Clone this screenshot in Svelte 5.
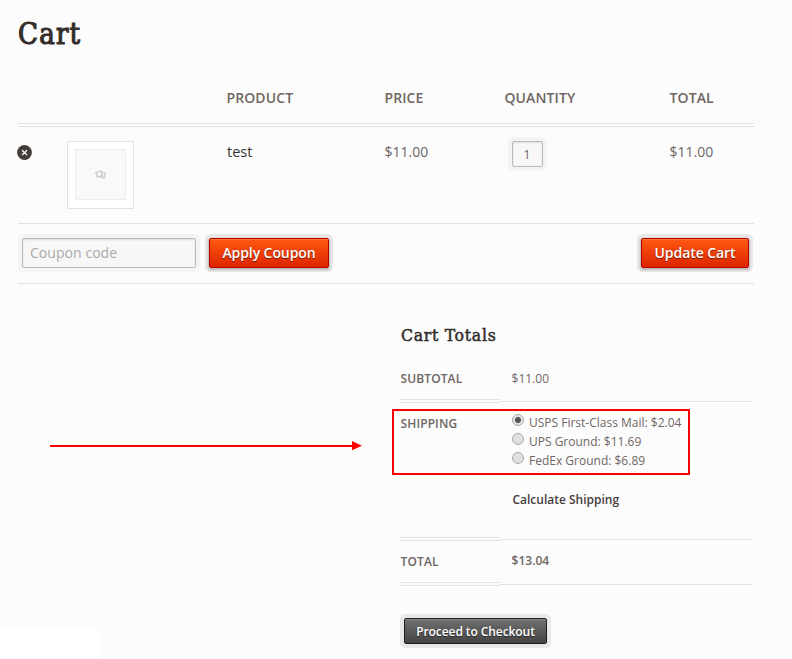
<script>
  let coupon = $state('');
  let selected = $state(0);
  const rates = ['USPS First-Class Mail: $2.04', 'UPS Ground: $11.69', 'FedEx Ground: $6.89'];
</script>

<main>
  <h1>Cart</h1>

  <div class="row head">
    <span class="product">PRODUCT</span>
    <span class="price">PRICE</span>
    <span class="qty">QUANTITY</span>
    <span>TOTAL</span>
  </div>

  <div class="row item">
    <button class="remove" aria-label="Remove">
      <svg width="15" height="15" viewBox="0 0 15 15">
        <circle cx="7.5" cy="7.5" r="7.4" fill="#463c39" />
        <path d="M5 5.2 10 10M10 5.2 5 10" stroke="#fff" stroke-width="1.2" />
      </svg>
    </button>
    <div class="thumb">
      <svg width="51" height="51" viewBox="0 0 51 51">
        <rect x=".5" y=".5" width="50" height="50" fill="#f9f9f9" stroke="#ebebeb" />
        <path d="M1 1 50 50M50 1 1 50" stroke="#f5f5f5" />
        <rect x="17" y="18" width="17" height="15" fill="#f9f9f9" />
        <g fill="none" stroke="#cbcbcb" stroke-width="1.4" stroke-linejoin="round">
          <path d="M20.8 23.6 26.2 22 27.4 26.6 22.5 28Z" />
          <path d="M26.2 23.1 30.4 24.4 29.2 28.8 24.7 27.6" />
        </g>
      </svg>
    </div>
    <span class="name">test</span>
    <span class="price">$11.00</span>
    <span class="qty"><input class="count" value="1" /></span>
    <span>$11.00</span>
  </div>

  <div class="row actions">
    <input class="coupon" placeholder="Coupon code" bind:value={coupon} />
    <button class="btn apply">Apply Coupon</button>
    <button class="btn update">Update Cart</button>
  </div>

  <section>
    <h2>Cart Totals</h2>
    <div class="line subtotal">
      <div class="label">SUBTOTAL</div>
      <div class="value">$11.00</div>
    </div>
    <div class="line shipping">
      <div class="label">SHIPPING</div>
      <div class="value">
        {#each rates as rate, i}
          <label><input type="radio" name="rate" value={i} bind:group={selected} /><span>{rate}</span></label>
        {/each}
        <div class="calc">Calculate Shipping</div>
      </div>
    </div>
    <div class="line total">
      <div class="label">TOTAL</div>
      <div class="value">$13.04</div>
    </div>
    <button class="btn checkout">Proceed to Checkout</button>
  </section>

  <div class="callout"></div>
  <svg class="arrow" width="312" height="10" viewBox="0 0 312 10">
    <path d="M0 4H302V0L312 4.7 302 9.3V6H0Z" fill="#f00" />
  </svg>
  <div class="patch"></div>
</main>

<style>
  :global(body) { background: #fcfcfc; overflow: hidden; }
  * { box-sizing: border-box; }
  main {
    position: relative;
    width: 792px;
    height: 659px;
    padding: 0 38px 0 18px;
    background: #fcfcfc;
    color: #6f6562;
    font: 14px/20px "Open Sans", "Noto Sans", sans-serif;
  }
  h1, h2 {
    margin: 0;
    color: #332e2b;
    font-family: "DejaVu Serif Condensed", "DejaVu Serif", serif;
    font-stretch: condensed;
    font-weight: 400;
    white-space: nowrap;
    -webkit-text-stroke: 1.1px #332e2b;
  }
  h1 { height: 73px; padding-top: 14px; font-size: 29px; line-height: 40px; letter-spacing: 1.2px; }
  h2 { height: 68px; font-size: 17.5px; line-height: 24px; padding: 39px 0 0 1px; letter-spacing: .7px; -webkit-text-stroke-width: .5px; }
  .row { display: flex; align-items: flex-start; border-bottom: 1px solid #e3e1e1; }
  .head { height: 54px; padding-top: 15px; border-bottom: 4px double #e3e1e1; font-weight: 550; letter-spacing: .1px; }
  .head .product { width: 158px; margin-left: 208.5px; }
  .price { width: 120px; }
  .qty { width: 165px; }
  .item { height: 97px; padding-top: 15px; }
  .remove { display: flex; width: 15px; height: 15px; margin: 3px 0 0 -1px; padding: 0; border: 0; background: none; }
  .thumb { display: flex; width: 67px; height: 68px; margin: -1px 93px 0 35px; padding: 7px; border: 1px solid #e3e1e1; background: #fff; }
  .name { width: 157.5px; color: #3b3431; font-weight: 500; font-size: 14.5px; }
  input { font-family: inherit; }
  .count, .coupon {
    display: block;
    border: 1px solid #bdb9b9;
    border-radius: 2px;
    outline: 0;
    background: #f7f7f7;
    box-shadow: inset 0 1px 2px #ddd, 0 0 0 4px #f4f4f4;
    color: #6f6562;
  }
  .count { width: 31px; height: 26px; margin: -1px 0 0 7px; padding: 1px 0 0; font-size: 12px; text-align: center; }
  .actions { height: 60px; padding: 14px 5px 0 4px; }
  .coupon { width: 174px; height: 30px; padding: 0 7px 2px; font-size: 14px; letter-spacing: .05px; }
  .coupon::placeholder { color: #aaa; }
  .btn {
    padding: 0;
    border: 1px solid #b80000;
    border-radius: 2px;
    background: linear-gradient(#ff5812, #dd2500);
    box-shadow: inset 0 1px 0 #ff762f, 0 1px 2px 1px #bbb, 0 0 0 4px #e8e8e8;
    color: #fff;
    font: 650 14px/20px "Open Sans", "Noto Sans", sans-serif;
    letter-spacing: -.08px;
    text-shadow: 0 1px 1px rgba(0, 0, 0, .5);
    white-space: nowrap;
  }
  .apply { width: 120px; height: 30px; margin-left: 13px; }
  .update { width: 108px; height: 30px; margin-left: auto; }
  section { width: 353px; margin-left: 382px; font-size: 12px; line-height: 19px; }
  .line { display: flex; align-items: flex-start; }
  .label { width: 100px; padding-left: .6px; border-bottom: 4px double #e3e1e1; font-weight: 550; letter-spacing: .1px; }
  .value { width: 253px; padding-left: 11.6px; border-bottom: 1px solid #e3e1e1; }
  .subtotal .label { height: 51px; padding-top: 17px; }
  .subtotal .value { height: 50px; padding-top: 17px; }
  .shipping { height: 138px; }
  .shipping .label { height: 138px; padding-top: 11px; }
  .shipping .value { height: 137px; padding-top: 10px; }
  label { display: flex; align-items: flex-start; height: 19px; }
  label span { margin-left: 5px; }
  input[type="radio"] {
    appearance: none;
    flex: none;
    width: 12px;
    height: 12px;
    margin: 1px 0 0 .4px;
    border: 1px solid #a9a9a9;
    border-radius: 50%;
    background: linear-gradient(#e2e2e2, #dedede);
  }
  input[type="radio"]:checked { background: radial-gradient(circle, #555 0 2.6px, #e4e4e4 3.4px); }
  .calc { margin: 20px 0 0 .8px; color: #463c3c; font-weight: 600; }
  .total .label { height: 45px; padding-top: 11px; }
  .total .value { height: 44px; padding-top: 10px; font-weight: 600; }
  .checkout {
    display: block;
    width: 143px;
    height: 26px;
    margin: 32px 0 0 4px;
    padding-top: 2px;
    border-color: #1d1d1d;
    background: linear-gradient(#707070, #444);
    box-shadow: inset 0 1px 0 #868686, 0 0 0 4px #e8e8e8;
    font-size: 12px;
  }
  .callout { position: absolute; left: 392px; top: 409px; width: 298px; height: 66px; border: 2px solid #f00; }
  .arrow { position: absolute; left: 50px; top: 441px; }
  .patch { position: absolute; left: 0; top: 629px; width: 100px; height: 30px; background: #fff; }
</style>
